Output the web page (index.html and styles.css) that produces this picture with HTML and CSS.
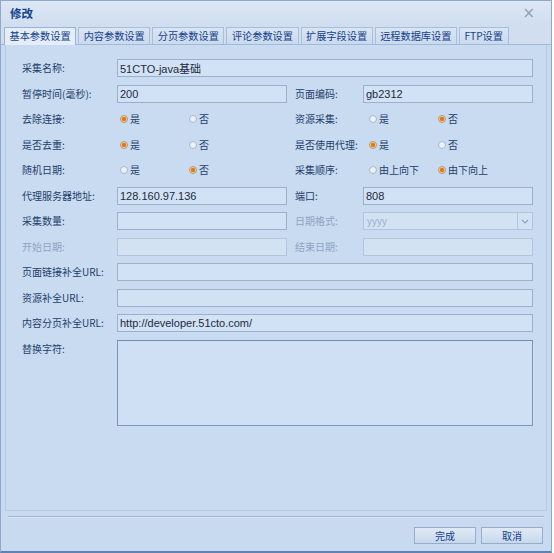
FILE: index.html
```html
<!DOCTYPE html>
<html lang="zh-CN">
<head>
<meta charset="utf-8">
<title>修改</title>
<link rel="stylesheet" href="styles.css">
</head>
<body>
<div class="win">
  <div class="titlebar">
    <span class="title">修改</span>
    <span class="close">×</span>
  </div>
  <div class="tabs">
    <div class="tab active">基本参数设置</div>
    <div class="tab">内容参数设置</div>
    <div class="tab">分页参数设置</div>
    <div class="tab">评论参数设置</div>
    <div class="tab">扩展字段设置</div>
    <div class="tab">远程数据库设置</div>
    <div class="tab">FTP设置</div>
  </div>
  <div class="panel">
    <div class="form">
      <div class="lbl">采集名称:</div>
      <input class="inp wide" readonly value="51CTO-java基础">

      <div class="lbl">暂停时间(毫秒):</div>
      <input class="inp" readonly value="200">
      <div class="lbl r">页面编码:</div>
      <input class="inp" readonly value="gb2312">

      <div class="lbl">去除连接:</div>
      <div class="radios"><span class="opt"><span class="rb on"></span>是</span><span class="opt"><span class="rb"></span>否</span></div>
      <div class="lbl r">资源采集:</div>
      <div class="radios rr"><span class="opt"><span class="rb"></span>是</span><span class="opt"><span class="rb on"></span>否</span></div>

      <div class="lbl">是否去重:</div>
      <div class="radios"><span class="opt"><span class="rb on"></span>是</span><span class="opt"><span class="rb"></span>否</span></div>
      <div class="lbl r">是否使用代理:</div>
      <div class="radios rr"><span class="opt"><span class="rb on"></span>是</span><span class="opt"><span class="rb"></span>否</span></div>

      <div class="lbl">随机日期:</div>
      <div class="radios"><span class="opt"><span class="rb"></span>是</span><span class="opt"><span class="rb on"></span>否</span></div>
      <div class="lbl r">采集顺序:</div>
      <div class="radios rr"><span class="opt"><span class="rb"></span>由上向下</span><span class="opt"><span class="rb on"></span>由下向上</span></div>

      <div class="lbl">代理服务器地址:</div>
      <input class="inp" readonly value="128.160.97.136">
      <div class="lbl r">端口:</div>
      <input class="inp" readonly value="808">

      <div class="lbl">采集数量:</div>
      <input class="inp" readonly value="">
      <div class="lbl r dis">日期格式:</div>
      <div class="inp dis sel"><span class="seltext">yyyy</span><span class="trigger"><svg width="8" height="5" viewBox="0 0 8 5"><path d="M1 1 L4 4 L7 1" fill="none" stroke="#8ea3c0" stroke-width="1.2"/></svg></span></div>

      <div class="lbl dis">开始日期:</div>
      <input class="inp dis" readonly value="">
      <div class="lbl r dis">结束日期:</div>
      <input class="inp dis" readonly value="">

      <div class="lbl">页面链接补全URL:</div>
      <input class="inp wide" readonly value="">

      <div class="lbl">资源补全URL:</div>
      <input class="inp wide" readonly value="">

      <div class="lbl">内容分页补全URL:</div>
      <input class="inp wide" readonly value="http://developer.51cto.com/">

      <div class="lbl top">替换字符:</div>
      <textarea class="ta wide" readonly></textarea>
    </div>
  </div>
  <div class="footer">
    <button class="btn">完成</button>
    <button class="btn">取消</button>
  </div>
</div>
</body>
</html>
```

FILE: styles.css
```css
html, body {
  margin: 0;
  padding: 0;
  background: #ffffff;
  font-family: "Noto Sans CJK SC", "Liberation Sans", sans-serif;
}

.win {
  width: 552px;
  height: 553px;
  box-sizing: border-box;
  background: #c8daef;
  border: 1px solid #8fa8cb;
  border-bottom: 2px solid #5d83b8;
  display: flex;
  flex-direction: column;
}

.titlebar {
  height: 24px;
  flex: none;
  display: flex;
  align-items: center;
  justify-content: space-between;
  padding: 0 16px 0 9px;
  background: linear-gradient(#dce7f4, #d0deef);
}

.title {
  font-weight: bold;
  font-size: 11.5px;
  color: #15428b;
}

.close {
  color: #8ea1b9;
  font-size: 15px;
  font-family: "DejaVu Sans", sans-serif;
  line-height: 1;
}

.tabs {
  flex: none;
  display: flex;
  gap: 2px;
  padding: 2px 0 0 3px;
  border-bottom: 1px solid #a3b9d8;
  background: #d0deef;
}

.tab {
  height: 17px;
  box-sizing: border-box;
  border: 1px solid #a9bedb;
  border-bottom: none;
  padding: 0 4.5px;
  font-size: 10.2px;
  line-height: 16px;
  color: #15428b;
  background: linear-gradient(#dae5f3, #cadaee);
  white-space: nowrap;
}

.tab.active {
  height: 18px;
  margin-bottom: -1px;
  background: #e4edf8;
  border-color: #99b2d5;
}

.panel {
  flex: 1;
  margin: 0 4px;
  border: 1px solid #b7cae3;
  border-top: none;
  padding: 14px 0 0 16px;
  background: #c8dbf0;
}

.form {
  display: grid;
  grid-template-columns: 95px 170px 76px 170px;
  grid-template-rows: repeat(11, 18px) 86px;
  row-gap: 7.5px;
  align-items: center;
}

.lbl {
  font-size: 10px;
  color: #1f3e6b;
  white-space: nowrap;
  line-height: 14px;
}

.lbl.r {
  padding-left: 8px;
}

.lbl.dis {
  color: #8ea4c2;
}

.lbl.top {
  align-self: start;
  padding-top: 2px;
}

.inp {
  box-sizing: border-box;
  height: 18px;
  width: 100%;
  margin: 0;
  border: 1px solid #9bb0cd;
  background: #d2e2f5;
  font-family: "Liberation Sans", "Noto Sans CJK SC", sans-serif;
  font-size: 11px;
  color: #1b2a40;
  padding: 0 2px;
  outline: none;
}

.inp.dis {
  background: #d3e2f3;
  border-color: #b3c5dc;
}

.wide {
  grid-column: 2 / 5;
}

.sel {
  display: flex;
  align-items: center;
  padding: 0 0 0 3px;
}

.seltext {
  flex: 1;
  color: #9db0cb;
  font-size: 10px;
}

.trigger {
  width: 14px;
  height: 100%;
  border-left: 1px solid #b3c5dc;
  display: flex;
  align-items: center;
  justify-content: center;
}

.radios {
  display: flex;
  padding-left: 3px;
  font-size: 10px;
  color: #1f3e6b;
  line-height: 14px;
}

.radios.rr {
  padding-left: 6px;
}

.opt {
  width: 69px;
  display: flex;
  align-items: center;
  gap: 2px;
  white-space: nowrap;
}

.rb {
  width: 8px;
  height: 8px;
  border-radius: 50%;
  box-sizing: border-box;
  border: 1px solid #a8b7ca;
  background: #edf2f8;
  flex: none;
}

.rb.on {
  border-color: #b39a78;
  background: radial-gradient(circle, #e47a16 0 1.8px, #f4cf9c 2.6px);
}

.ta {
  box-sizing: border-box;
  height: 86px;
  width: 100%;
  margin: 0;
  align-self: start;
  border: 1px solid #7b96bb;
  border-top-color: #6f8bb3;
  background: #cfe0f4;
  resize: none;
  outline: none;
  padding: 2px;
  font-family: "Liberation Sans", "Noto Sans CJK SC", sans-serif;
  font-size: 11px;
}

.footer {
  flex: none;
  height: 35px;
  box-sizing: border-box;
  margin: 5px 7px 0;
  border-top: 1px solid #a1b6d4;
  box-shadow: inset 0 1px 0 #dbe6f4;
  display: flex;
  justify-content: flex-end;
  align-items: flex-start;
  gap: 5px;
  padding: 10px 1px 0 0;
}

.btn {
  width: 62px;
  height: 17px;
  margin: 0;
  padding: 0;
  border: 1px solid #97adcb;
  background: linear-gradient(#e0eaf6, #c8d8ec);
  font-family: "Noto Sans CJK SC", sans-serif;
  font-size: 10px;
  line-height: 15px;
  color: #15428b;
}
```
